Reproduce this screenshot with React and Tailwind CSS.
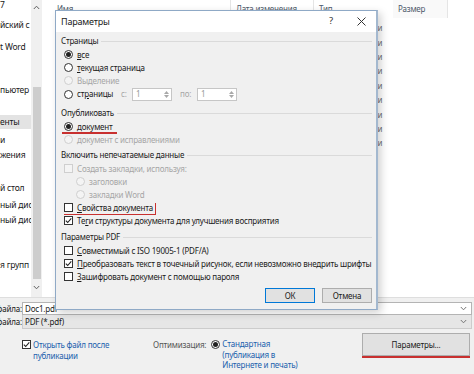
import React from "react";

function Radio({ checked = false, disabled = false }) {
  return (
    <span
      className={
        "w-[9px] h-[9px] rounded-full border flex items-center justify-center shrink-0 " +
        (disabled ? "border-[#cfcfcf] bg-[#f4f4f4]" : "border-[#333333] bg-white")
      }
    >
      {checked ? <span className="w-[5px] h-[5px] rounded-full bg-[#222222]" /> : null}
    </span>
  );
}

function Check({ checked = false, disabled = false }) {
  return (
    <span
      className={
        "w-[9px] h-[9px] border flex items-center justify-center shrink-0 " +
        (disabled ? "border-[#cfcfcf] bg-[#f4f4f4]" : "border-[#333333] bg-white")
      }
    >
      {checked ? (
        <svg width="7" height="7" viewBox="0 0 7 7">
          <path d="M0.8 3.6 L2.7 5.5 L6.3 1.4" fill="none" stroke="#222" strokeWidth="1.1" />
        </svg>
      ) : null}
    </span>
  );
}

function Chevron({ color = "#777" }) {
  return (
    <svg width="7" height="5" viewBox="0 0 7 5">
      <path d="M0.8 1 L3.5 3.8 L6.2 1" fill="none" stroke={color} strokeWidth="1" />
    </svg>
  );
}

function GroupHeader({ children, className = "" }) {
  return (
    <div className={"h-[14px] flex items-center gap-[3px] " + className}>
      <span className="whitespace-nowrap text-[#1a1a1a]">{children}</span>
      <span className="flex-1 border-t border-[#dadada]" />
    </div>
  );
}

function Row({ children, className = "" }) {
  return (
    <div className={"h-[13px] flex items-center gap-[4px] ml-[3px] whitespace-nowrap " + className}>{children}</div>
  );
}

function Spin() {
  return (
    <span className="w-[40px] h-[13px] border border-[#c6c6c6] bg-white flex items-center pl-[3px] text-[#9a9a9a]">
      <span className="flex-1">1</span>
      <span className="w-[8px] flex flex-col items-center justify-center gap-[1px] mr-[1px]">
        <svg width="5" height="3" viewBox="0 0 5 3">
          <path d="M0 3 L2.5 0 L5 3 Z" fill="#a8a8a8" />
        </svg>
        <svg width="5" height="3" viewBox="0 0 5 3">
          <path d="M0 0 L2.5 3 L5 0 Z" fill="#a8a8a8" />
        </svg>
      </span>
    </span>
  );
}

function Dialog() {
  const dis = "text-[#a6a6a6]";
  return (
    <div className="absolute left-[55px] top-[10px] w-[323px] h-[300px] border border-[#8fa9c6] border-r-2 border-r-[#a3b8cf] bg-[#f0f0f0] shadow-[3px_3px_8px_rgba(0,0,0,0.18)] flex flex-col text-[#1a1a1a]">
      <div className="h-[21px] bg-white flex items-center pl-[5px]">
        <span className="text-[9px] text-[#1a1a1a]">Параметры</span>
        <span className="ml-auto w-[30px] text-center text-[9.5px] text-[#333]">?</span>
        <span className="w-[30px] flex items-center justify-center">
          <svg width="9" height="9" viewBox="0 0 9 9">
            <path d="M0.5 0.5 L8.5 8.5 M8.5 0.5 L0.5 8.5" stroke="#333" strokeWidth="1" />
          </svg>
        </span>
      </div>
      <div className="flex-1 flex flex-col pl-[5px] pr-[4px] pt-[2px]">
        <GroupHeader>Страницы</GroupHeader>
        <Row>
          <Radio checked />
          <span><u>в</u>се</span>
        </Row>
        <Row>
          <Radio />
          <span><u>т</u>екущая страница</span>
        </Row>
        <Row>
          <Radio disabled />
          <span className={dis}>Выделение</span>
        </Row>
        <div className="h-[14px] flex items-center ml-[3px] whitespace-nowrap">
          <Radio />
          <span className="w-[48px] pl-[4px]">ст<u>р</u>аницы</span>
          <span className={"w-[11px] " + dis}>с:</span>
          <Spin />
          <span className={"w-[25px] pl-[8px] " + dis}>по:</span>
          <Spin />
        </div>
        <GroupHeader className="mt-[5px]">Опубликовать</GroupHeader>
        <Row>
          <span className="relative flex items-center gap-[4px] h-[13px]">
            <Radio checked />
            <span><u>д</u>окумент</span>
            <span className="absolute left-[-2px] right-[-4px] bottom-[-1px] h-[2px] bg-[#c8302f]" />
          </span>
        </Row>
        <Row>
          <Radio disabled />
          <span className={dis}>документ с исправлениями</span>
        </Row>
        <GroupHeader className="mt-[2px]">Включить непечатаемые данные</GroupHeader>
        <Row>
          <Check disabled />
          <span className={dis}>Создать закладки, используя:</span>
        </Row>
        <Row className="ml-[15px]">
          <Radio disabled />
          <span className={dis}>заголовки</span>
        </Row>
        <Row className="ml-[15px]">
          <Radio disabled />
          <span className={dis}>закладки Word</span>
        </Row>
        <Row>
          <span className="relative flex items-center gap-[4px] h-[13px] pr-[2px]">
            <Check />
            <span><u>С</u>войства документа</span>
            <span className="absolute left-[0px] right-[-1px] bottom-[-1px] h-[1.5px] bg-[#c8302f]" />
            <span className="absolute right-[-1px] top-[2px] bottom-[-1px] w-[1.5px] bg-[#c8302f]" />
          </span>
        </Row>
        <Row>
          <Check checked />
          <span>Те<u>г</u>и структуры документа для улучшения восприятия</span>
        </Row>
        <GroupHeader className="mt-[3px]">Параметры PDF</GroupHeader>
        <Row>
          <Check />
          <span><u>С</u>овместимый с ISO 19005-1 (PDF/A)</span>
        </Row>
        <Row>
          <Check checked />
          <span><u>П</u>реобразовать текст в точечный рисунок, если невозможно внедрить шрифты</span>
        </Row>
        <Row>
          <Check />
          <span><u>З</u>ашифровать документ с помощью пароля</span>
        </Row>
        <div className="mt-[5px] h-[15px] flex justify-end gap-[7px]">
          <span className="w-[50px] h-[15px] border border-[#0078d7] bg-[#e1e1e1] flex items-center justify-center">
            ОК
          </span>
          <span className="w-[50px] h-[15px] border border-[#adadad] bg-[#e1e1e1] flex items-center justify-center">
            Отмена
          </span>
        </div>
      </div>
    </div>
  );
}

const navItems = [
  { t: "7", mt: "mt-[-2px]" },
  { t: "йский с", mt: "mt-[6px]" },
  { t: "t Word", mt: "mt-[8px]" },
  { t: "пьютер", mt: "mt-[29px]" },
  { t: "енты", mt: "mt-[18px]", sel: true },
  { t: "и", mt: "mt-[4px]" },
  { t: "жения", mt: "mt-[1px]" },
  { t: "й стол", mt: "mt-[19px]" },
  { t: "ный дис", mt: "mt-[3px]" },
  { t: "ный дис", mt: "mt-[1px]" },
  { t: "я групп", mt: "mt-[31px]" },
];

export default function App() {
  return (
    <div className="w-[474px] h-[374px] relative overflow-hidden bg-white font-['Noto_Sans','Open_Sans',sans-serif] text-[8px] tracking-[-0.2px] text-[#1a1a1a]">
      <div className="h-[298px] flex border-b border-[#dedede]">
        <div className="w-[31px] bg-white overflow-hidden flex flex-col">
          {navItems.map((it, i) => (
            <div
              key={i}
              className={
                "h-[14px] shrink-0 flex items-center whitespace-nowrap text-[8.5px] " +
                it.mt +
                (it.sel ? " bg-[#e3e3e3]" : "")
              }
            >
              {it.t}
            </div>
          ))}
        </div>
        <div className="w-[11px] bg-[#f0f0f0] flex flex-col items-center">
          <div className="h-[14px] flex items-center justify-center">
            <svg width="7" height="5" viewBox="0 0 7 5">
              <path d="M0.8 4 L3.5 1.2 L6.2 4" fill="none" stroke="#606060" strokeWidth="1" />
            </svg>
          </div>
          <div className="flex-1 w-full flex flex-col items-center">
            <div className="mt-[73px] w-[8px] h-[192px] bg-[#cdcdcd]" />
          </div>
          <div className="h-[14px] flex items-center justify-center mb-[3px]">
            <Chevron color="#606060" />
          </div>
        </div>
        <div className="flex-1 bg-white flex flex-col">
          <div className="h-[18px] flex text-[#4d5a6b]">
            <div className="w-[188px] pl-[15px] flex items-center">Имя</div>
            <div className="w-[83px] pl-[5px] flex items-center border-l border-[#e5e5e5] border-b border-b-[#dcdcdc]">
              Дата изменения
            </div>
            <div className="w-[80px] pl-[5px] flex items-center border-l border-[#e5e5e5]">Тип</div>
            <div className="w-[55px] pl-[5px] flex items-center bg-[#f9f9f9] border-r border-[#e5e5e5]">
              Размер
            </div>
          </div>
          <div className="flex flex-col mt-[3px]">
            {Array.from({ length: 9 }).map((_, i) => (
              <div key={i} className="h-[14.4px] flex items-center text-[#6d6d6d]">
                <div className="w-[276px]" />
                <div className="w-[65px] overflow-hidden whitespace-nowrap">Папка с файлами</div>
              </div>
            ))}
          </div>
        </div>
      </div>
      <div className="h-[76px] bg-[#f0f0f0] flex flex-col pt-[4px]">
        <div className="h-[13px] flex items-stretch">
          <div className="w-[22px] overflow-hidden flex justify-end items-center whitespace-nowrap">Имя файла:</div>
          <div className="flex-1 mr-[2px] border border-[#b4b4b4] bg-white flex items-center pl-[2px] pr-[4px]">
            <span className="flex-1">Doc1.pdf</span>
            <Chevron />
          </div>
        </div>
        <div className="h-[14px] flex items-stretch">
          <div className="w-[22px] overflow-hidden flex justify-end items-center whitespace-nowrap">Тип файла:</div>
          <div className="flex-1 mr-[2px] border border-t-0 border-[#cccccc] bg-[#e6e6e6] flex items-center pl-[2px] pr-[4px]">
            <span className="flex-1">PDF (*.pdf)</span>
            <Chevron />
          </div>
        </div>
        <div className="flex mt-[4px] h-[40px]">
          <div className="w-[153px] pl-[22px] pt-[6px] flex items-start gap-[2px]">
            <div className="h-[11px] flex items-center">
              <Check checked />
            </div>
            <div className="leading-[11px] text-[#2161ad]">
              Открыть файл после
              <br />
              публикации
            </div>
          </div>
          <div className="w-[209px] pt-[6px] flex items-start">
            <span className="leading-[11px] text-[#555]">Оптимизация:</span>
            <div className="h-[11px] flex items-center ml-[5px] mr-[2px]">
              <Radio checked />
            </div>
            <div className="leading-[10.5px] text-[#2161ad]">
              Стандартная
              <br />
              (публикация в
              <br />
              Интернете и печать)
            </div>
          </div>
          <div className="w-[108px] flex flex-col">
            <div className="h-[23px] border border-[#adadad] bg-[#e1e1e1] flex items-center justify-center">
              Параметры...
            </div>
            <div className="h-[2px] bg-[#c8302f]" />
          </div>
        </div>
      </div>
      <Dialog />
    </div>
  );
}
